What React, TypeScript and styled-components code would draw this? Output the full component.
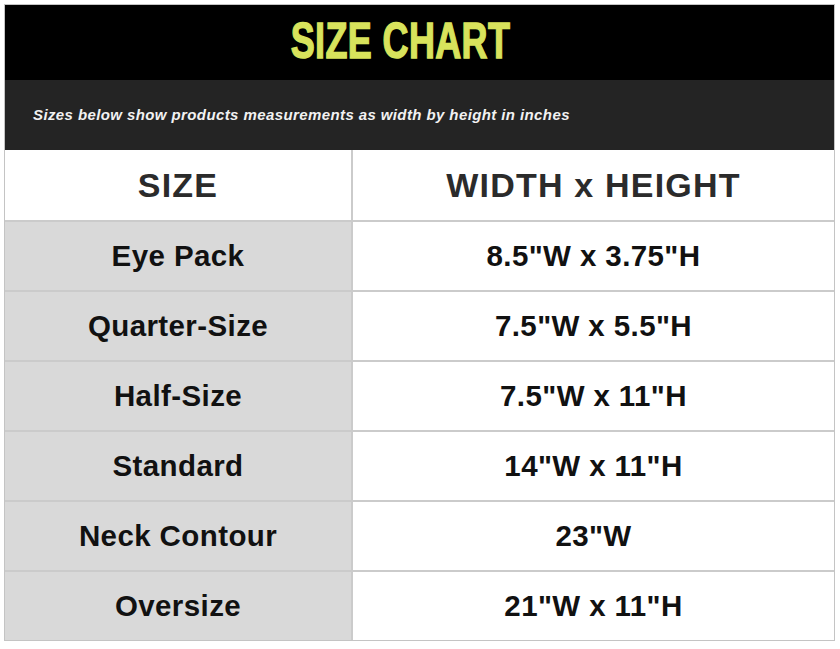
import React from "react";
import styled, { createGlobalStyle } from "styled-components";

const Global = createGlobalStyle`
  html, body { margin: 0; padding: 0; background: #ffffff; }
  body { font-family: "Liberation Sans", Arial, sans-serif; }
`;

const Page = styled.div`
  padding: 4px 5px 6px 4px;
  width: 840px;
  box-sizing: border-box;
`;

const Chart = styled.div`
  border: 1px solid #c4c4c4;
  display: flex;
  flex-direction: column;
`;

const TitleBar = styled.div`
  background: #000000;
  height: 75px;
  display: flex;
  align-items: center;
  justify-content: center;
  padding-right: 38px;
`;

const Title = styled.h1`
  margin: 0;
  display: inline-block;
  font-family: "Liberation Sans", Arial, sans-serif;
  font-weight: 700;
  font-size: 50px;
  line-height: 1;
  color: #d8e35c;
  transform: scaleX(0.72);
  letter-spacing: 0.5px;
  padding-bottom: 4px;
  -webkit-text-stroke: 1.4px #d8e35c;
`;

const SubBar = styled.div`
  background: #242424;
  height: 70px;
  display: flex;
  align-items: center;
  padding-left: 28px;
  padding-bottom: 2px;
  box-sizing: border-box;
`;

const Subtitle = styled.p`
  margin: 0;
  font-family: "Liberation Sans", Arial, sans-serif;
  font-style: italic;
  font-weight: 700;
  font-size: 15px;
  color: #f2f2f2;
  letter-spacing: 0.4px;
`;

const Row = styled.div`
  display: grid;
  grid-template-columns: 346px 1fr;
  height: 70px;
  box-sizing: border-box;
  border-top: 2px solid #cbcbcb;
  &:first-of-type { border-top: none; }
`;

const Cell = styled.div<{ $shade?: boolean; $head?: boolean }>`
  display: flex;
  align-items: center;
  justify-content: center;
  background: ${(p) => (p.$shade ? "#d9d9d9" : "#ffffff")};
  font-family: "Liberation Sans", Arial, sans-serif;
  font-weight: 700;
  font-size: ${(p) => (p.$head ? "34px" : "29.5px")};
  letter-spacing: ${(p) => (p.$head ? "1.2px" : "0.4px")};
  color: ${(p) => (p.$head ? "#2b2b2b" : "#111111")};
  & + & { border-left: 2px solid #cbcbcb; }
`;

const Body = styled.div`
  display: flex;
  flex-direction: column;
`;

const rows: [string, string][] = [
  ["Eye Pack", "8.5\"W x 3.75\"H"],
  ["Quarter-Size", "7.5\"W x 5.5\"H"],
  ["Half-Size", "7.5\"W x 11\"H"],
  ["Standard", "14\"W x 11\"H"],
  ["Neck Contour", "23\"W"],
  ["Oversize", "21\"W x 11\"H"],
];

export default function App() {
  return (
    <>
      <Global />
      <Page>
        <Chart>
          <TitleBar>
            <Title>SIZE CHART</Title>
          </TitleBar>
          <SubBar>
            <Subtitle>Sizes below show products measurements as width by height in inches</Subtitle>
          </SubBar>
          <Body>
            <Row>
              <Cell $head>SIZE</Cell>
              <Cell $head>WIDTH x HEIGHT</Cell>
            </Row>
            {rows.map(([size, dims]) => (
              <Row key={size}>
                <Cell $shade>{size}</Cell>
                <Cell>{dims}</Cell>
              </Row>
            ))}
          </Body>
        </Chart>
      </Page>
    </>
  );
}
